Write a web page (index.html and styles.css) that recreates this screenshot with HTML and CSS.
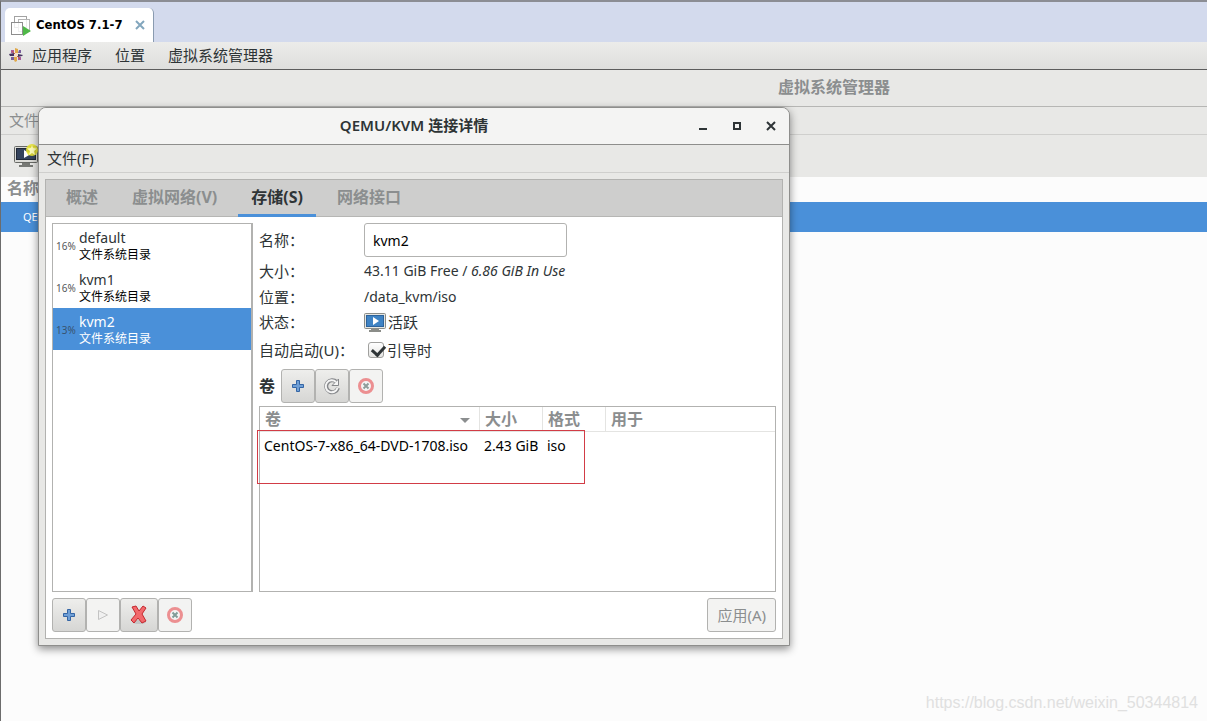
FILE: index.html
```html
<!DOCTYPE html>
<html lang="zh-CN">
<head>
<meta charset="utf-8">
<title>虚拟系统管理器</title>
<link rel="stylesheet" href="styles.css">
</head>
<body>
<div class="screen">
  <header class="vm-tabs">
    <div class="vm-tab">
      <svg class="vm-icon" width="20" height="21" viewBox="0 0 20 21" aria-hidden="true">
        <rect x="3.500" y="1.500" width="12" height="11" fill="#fff" stroke="#a2a2a2"/>
        <rect x="7.500" y="4.500" width="11" height="12" fill="#fff" fill-opacity=".8" stroke="#b5b5b5"/>
        <rect x=".5" y="7.500" width="11" height="12" fill="#fff" fill-opacity=".8" stroke="#8d8d8d"/>
        <path d="M12 11l8 5-8 5z" fill="#4fb848"/>
      </svg>
      <span>CentOS 7.1-7</span>
      <button class="vm-close" type="button" aria-label="关闭标签页">
        <svg width="10" height="10" viewBox="0 0 10 10"><path d="M1 1l8 8M9 1L1 9" stroke="#82a6bd" stroke-width="2"/></svg>
      </button>
    </div>
  </header>

  <nav class="panel">
    <svg class="distro" width="14" height="14" viewBox="0 0 14 14" aria-hidden="true">
      <path d="M6 0l3 1v4H6zM5 9h3v4l-2 1-1-2z" fill="#e0a94a"/>
      <path d="M0 6l5-1v3H1zM9 6l5 1-1 1-4 1z" fill="#45325f"/>
      <path d="M2 2h3v3H2zM9 9h3v3H9z" fill="#a85a9c"/>
      <path d="M10 2h2v3H9zM2 9h3v3H2z" fill="#7a5f9c"/>
      <path d="M5 5h4v4H5z" fill="#f2dfcb"/>
      <path d="M8 8l3 3M6 6L3 3" stroke="#c95a4e"/>
    </svg>
    <button type="button">应用程序</button>
    <button type="button">位置</button>
    <button type="button">虚拟系统管理器</button>
  </nav>

  <main class="manager">
    <h1 class="manager-title">虚拟系统管理器</h1>
    <div class="manager-menu"><button type="button">文件(F)</button></div>
    <div class="manager-tools">
      <button type="button" aria-label="新建虚拟机">
        <svg width="26" height="24" viewBox="0 0 26 24">
          <rect x="1.500" y="2.500" width="23" height="16" rx="1" fill="#dcdcd8" stroke="#686a66"/>
          <rect x="3.500" y="4.500" width="19" height="11" fill="#34435c" stroke="#202838"/>
          <path d="M11 6l7 4-7 4z" fill="#fff"/>
          <path d="M9 19h8v2h3v2H6v-2h3z" fill="#777975"/>
          <circle cx="19" cy="6" r="6" fill="#e8e332" fill-opacity=".9"/>
          <path d="M19 1l1 3 4 .5-3 2.500 1 4-3-2-3 2 1-4-3-2.500 4-.5z" fill="#fffdb8"/>
        </svg>
      </button>
    </div>
    <div class="manager-head">名称</div>
    <div class="manager-row">QEMU/KVM</div>
  </main>
  <p class="watermark">https://blog.csdn.net/weixin_50344814</p>

  <section class="dialog" role="dialog" aria-labelledby="dialog-title">
    <header class="titlebar">
      <h2 id="dialog-title">QEMU/KVM 连接详情</h2>
      <div class="window-buttons">
        <button type="button" aria-label="最小化"><svg width="10" height="10" viewBox="0 0 10 10"><path d="M1 8h8" stroke="#2e3436" stroke-width="2"/></svg></button>
        <button type="button" aria-label="最大化"><svg width="10" height="10" viewBox="0 0 10 10"><path d="M2 2h6v6H2z" fill="none" stroke="#2e3436" stroke-width="2"/></svg></button>
        <button type="button" aria-label="关闭"><svg width="10" height="10" viewBox="0 0 10 10"><path d="M1 1l8 8M9 1L1 9" stroke="#2e3436" stroke-width="2"/></svg></button>
      </div>
    </header>
    <div class="menubar"><button type="button">文件(F)</button></div>

    <div class="notebook">
      <div class="tabs" role="tablist">
        <button type="button" role="tab">概述</button>
        <button type="button" role="tab">虚拟网络(V)</button>
        <button type="button" role="tab" class="active" aria-selected="true">存储(S)</button>
        <button type="button" role="tab">网络接口</button>
      </div>

      <div class="page">
        <div class="columns">
          <ul class="pools">
            <li><span class="percent">16%</span><div><b>default</b><small>文件系统目录</small></div></li>
            <li><span class="percent">16%</span><div><b>kvm1</b><small>文件系统目录</small></div></li>
            <li class="selected"><span class="percent">13%</span><div><b>kvm2</b><small>文件系统目录</small></div></li>
          </ul>

          <div class="details">
            <div class="form">
              <label for="pool-name">名称<span class="colon">：</span></label>
              <input class="name" id="pool-name" type="text" value="kvm2">
              <span>大小<span class="colon">：</span></span>
              <span class="value">43.11 GiB Free / <i>6.86 GiB In Use</i></span>
              <span>位置<span class="colon">：</span></span>
              <span class="value">/data_kvm/iso</span>
              <span>状态<span class="colon">：</span></span>
              <span class="state">
                <svg width="22" height="20" viewBox="0 0 22 20" aria-hidden="true">
                  <rect x=".5" y="1.500" width="21" height="15" rx="1" fill="#e6e6e2" stroke="#8b8d89"/>
                  <rect x="2.500" y="3.500" width="17" height="11" fill="#3f83c4" stroke="#2d639b"/>
                  <path d="M9 5l6 4-6 4z" fill="#fff"/>
                  <path d="M7 17h8v1h2v2H5v-2h2z" fill="#8b8d89"/>
                </svg>活跃
              </span>
              <span class="auto">自动启动(U)<span class="colon">：</span></span>
              <label class="boot"><input type="checkbox" checked>引导时</label>
            </div>

            <div class="volume-tools">
              <strong>卷</strong>
              <div class="buttons">
                <button class="tool" type="button" aria-label="新建卷"><svg width="14" height="14" viewBox="0 0 14 14"><path d="M5.500 1.500h3v4h4v3h-4v4h-3v-4h-4v-3h4z" fill="#6f9fd6" stroke="#3465a4"/></svg></button>
                <button class="tool" type="button" aria-label="刷新卷列表"><svg width="18" height="18" viewBox="0 0 18 18" fill="none"><path d="M13.500 5A6 6 0 1 0 15 11" stroke="#85878a" stroke-width="4"/><path d="M15.500 2v6.500H9z" fill="#f5f5f5" stroke="#85878a"/><path d="M13 5A6 6 0 1 0 14.500 11" stroke="#f5f5f5" stroke-width="2"/></svg></button>
                <button class="tool" type="button" aria-label="删除卷" disabled><svg width="18" height="18" viewBox="0 0 18 18"><circle cx="9" cy="9" r="6.500" fill="#f4f4f4" stroke="#ec8f91" stroke-width="3"/><path d="M6.500 6.500l5 5M11.500 6.500l-5 5" stroke="#8f9c9a" stroke-width="2"/></svg></button>
              </div>
            </div>

            <div class="volumes">
              <table>
                <colgroup><col class="c-name"><col class="c-size"><col class="c-format"><col></colgroup>
                <thead><tr><th>卷<svg class="sort" width="10" height="5" viewBox="0 0 10 5" aria-hidden="true"><path d="M0 0h10L5 5z" fill="#8b8e8f"/></svg></th><th>大小</th><th>格式</th><th>用于</th></tr></thead>
                <tbody><tr><td>CentOS-7-x86_64-DVD-1708.iso</td><td>2.43 GiB</td><td>iso</td><td></td></tr></tbody>
              </table>
              <div class="marker"></div>
            </div>
          </div>
        </div>

        <footer class="actions">
          <div class="buttons">
            <button class="tool" type="button" aria-label="添加池"><svg width="14" height="14" viewBox="0 0 14 14"><path d="M5.500 1.500h3v4h4v3h-4v4h-3v-4h-4v-3h4z" fill="#6f9fd6" stroke="#3465a4"/></svg></button>
            <button class="tool" type="button" aria-label="启动池" disabled><svg width="12" height="12" viewBox="0 0 12 12"><path d="M1.500 1.500l9 4.500-9 4.500z" fill="#f0f0f0" stroke="#c3c3c3"/></svg></button>
            <button class="tool wide" type="button" aria-label="停止池"><svg width="18" height="20" viewBox="0 0 18 20"><ellipse cx="9" cy="17" rx="7" ry="2" fill="#c4c4c4"/><path d="M2 2l4-1 3 5 4-5 3 2-4 6 4 7-4 2-4-5-4 5-3-3 5-6z" fill="#f2696c" stroke="#c4282e"/></svg></button>
            <button class="tool" type="button" aria-label="删除池" disabled><svg width="18" height="18" viewBox="0 0 18 18"><circle cx="9" cy="9" r="6.500" fill="#f4f4f4" stroke="#ec8f91" stroke-width="3"/><path d="M6.500 6.500l5 5M11.500 6.500l-5 5" stroke="#809c98" stroke-width="2"/></svg></button>
          </div>
          <button class="apply" type="button" disabled>应用(A)</button>
        </footer>
      </div>
    </div>
  </section>
</div>
</body>
</html>
```

FILE: styles.css
```css
* { box-sizing: border-box; }

body {
  margin: 0;
  background: #fcfcfc;
  color: #2e3436;
  font: 13px/20px "Noto Sans", "Noto Sans CJK SC", sans-serif;
}

button, input { font: inherit; color: inherit; }
button { padding: 0; border: 0; background: none; }
svg { display: block; flex: none; }
h1, h2, p, ul { margin: 0; padding: 0; }

.screen {
  position: relative;
  min-height: 100vh;
  display: flex;
  flex-direction: column;
  overflow: hidden;
  border-top: 2px solid #8b8d94;
  border-left: 1px solid #6c6c6c;
}

/* Virtual machine tab strip */
.vm-tabs {
  display: flex;
  height: 40px;
  padding: 6px 4px 0;
  background: #d3daed;
}
.vm-tab {
  display: flex;
  align-items: center;
  padding: 0 8px 0 6px;
  border-right: 1px solid #8a9bb0;
  border-radius: 5px 5px 0 0;
  background: #fff;
  color: #000;
  font: bold 13px/20px "DejaVu Sans Condensed", "DejaVu Sans", sans-serif;
}
.vm-icon { margin-right: 5px; }
.vm-close { margin-left: 12px; }

/* Guest desktop panel */
.panel {
  display: flex;
  align-items: center;
  height: 28px;
  padding: 0 8px 2px;
  border-bottom: 1px solid #5c5c5c;
  background: linear-gradient(#ececea, #dededc);
  font-size: 15px;
}
.distro { margin-right: 9px; }
.panel button { margin-right: 23px; }

.manager { flex: 1; }
.manager-title {
  height: 37px;
  padding-left: 777px;
  border-bottom: 1px solid #b6b6b4;
  background: #e8e8e6;
  color: #8b8e8f;
  font-size: 16px;
  line-height: 34px;
}
.manager-menu {
  height: 28px;
  padding: 3px 8px;
  border-bottom: 1px solid #cfcfcd;
  background: #e8e8e6;
  color: #8b8e8f;
  font-size: 15px;
}
.manager-tools { height: 42px; padding: 9px 12px; background: #e8e8e6; }
.manager-head { height: 25px; padding: 1px 6px; color: #8b8e8f; font-size: 16px; font-weight: bold; }
.manager-row { height: 30px; padding: 5px 22px; background: #4a90d9; color: #fff; font-size: 11px; }
.watermark { padding: 0 9px 8px; color: #e0e0e0; font: 16px/20px "Liberation Sans", sans-serif; text-align: right; }

/* Connection details window */
.dialog {
  position: absolute;
  top: 105px;
  left: 37px;
  width: 752px;
  border: 1px solid #8e8e8c;
  border-radius: 8px 8px 0 0;
  background: #e8e8e6;
  box-shadow: 0 3px 8px rgba(0, 0, 0, .45);
}
.titlebar {
  position: relative;
  height: 37px;
  border-bottom: 1px solid #8e8e8c;
  border-radius: 7px 7px 0 0;
  background: #f4f4f3;
}
.titlebar h2 { font-size: 15px; font-weight: 600; line-height: 34px; text-align: center; }
.window-buttons {
  position: absolute;
  top: 0;
  right: 0;
  display: flex;
  gap: 24px;
  padding: 13px;
}
.menubar { height: 28px; padding: 3px 8px; border-bottom: 1px solid #cfcfcd; font-size: 15px; }

.notebook { margin: 6px; border: 1px solid #b2b2b0; background: #fff; }
.tabs { display: flex; height: 37px; padding-left: 7px; border-bottom: 1px solid #b6b6b4; background: #cececd; }
.tabs button {
  height: 37px;
  margin-right: 8px;
  padding: 0 13px;
  border-bottom: 3px solid transparent;
  color: #8b8e8f;
  font-size: 16px;
  font-weight: bold;
}
.tabs .active { border-color: #4a90d9; color: #2e3436; }

.page { padding: 6px; }
.columns { display: grid; grid-template-columns: 201px 1fr; gap: 6px; }
.pools { border: 1px solid #b2b2b0; border-right-width: 2px; list-style: none; }
.pools li { display: flex; align-items: center; height: 42px; padding: 1px 0 0 3px; }
.pools b, .pools small { display: block; }
.pools b { font-size: 14px; font-weight: normal; line-height: 18px; }
.pools small { color: #000; font-size: 12px; line-height: 16px; }
.percent { width: 23px; color: #555759; font-size: 10px; }
.pools .selected { background: #4a90d9; color: #fff; }
.pools .selected small { color: #fff; }
.pools .selected .percent { color: #38536f; }

.form {
  display: grid;
  grid-template-columns: 105px 1fr;
  grid-template-rows: 34px 28px 24px 26px 30px;
  align-items: center;
  font-size: 15px;
}
.form .value { font-size: 14px; }
.colon { font-family: "Noto Sans CJK TC", sans-serif; line-height: 1; }
.name {
  width: 203px;
  height: 34px;
  padding: 0 8px;
  border: 1px solid #b2b2b0;
  border-radius: 3px;
  background: #fff;
  color: #000;
  font-size: 14px;
}
.state { display: flex; align-items: center; gap: 2px; }
.auto { white-space: nowrap; }
.boot { display: flex; align-items: center; gap: 3px; padding-left: 4px; }
.boot input {
  appearance: none;
  width: 16px;
  height: 16px;
  margin: 0;
  border: 1px solid #a0a09e;
  border-radius: 3px;
  background: linear-gradient(#fff, #e4e4e2);
}
.boot input:checked::after {
  content: "";
  display: block;
  width: 6px;
  height: 10px;
  margin: 0 0 0 5px;
  border: solid #2e3436;
  border-width: 0 3px 3px 0;
  transform: rotate(42deg);
}

.volume-tools { display: flex; align-items: center; gap: 6px; margin: 4px 0 3px; font-size: 16px; }
.buttons { display: flex; }
.tool {
  display: flex;
  align-items: center;
  justify-content: center;
  width: 34px;
  height: 34px;
  border: 1px solid #b2b2b0;
  border-radius: 3px;
  background: linear-gradient(#eeeeec, #d6d6d4);
}
.tool:disabled, .apply:disabled { background: #f3f3f2; }
.wide { width: 38px; }

.volumes { position: relative; min-height: 186px; border: 1px solid #b2b2b0; }
table { width: 100%; table-layout: fixed; border-spacing: 0; }
.c-name { width: 220px; }
.c-size, .c-format { width: 63px; }
th {
  height: 25px;
  padding: 0 5px;
  border-right: 1px solid #e4e4e2;
  border-bottom: 1px solid #e4e4e2;
  color: #8b8e8f;
  font-size: 16px;
  line-height: 22px;
  text-align: left;
}
th:last-child { border-right: 0; }
.sort { float: right; margin: 10px 4px 0 0; }
td { height: 28px; padding: 0 4px; color: #000; font-size: 14px; white-space: nowrap; }
.marker {
  position: absolute;
  top: 23px;
  left: -3px;
  width: 328px;
  height: 54px;
  border: 1px solid #d23c46;
}

.actions { display: flex; justify-content: space-between; padding-top: 6px; }
.apply { height: 34px; padding: 0 9px; border: 1px solid #b2b2b0; border-radius: 3px; color: #8b8e8f; font-size: 15px; }
```
